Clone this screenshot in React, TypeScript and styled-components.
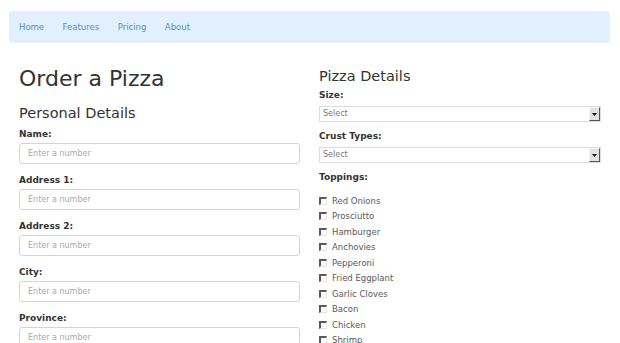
import React from "react";
import styled, { createGlobalStyle } from "styled-components";

const Global = createGlobalStyle`
  html, body { margin: 0; padding: 0; background: #fff; }
  body { font-family: "DejaVu Sans", Verdana, sans-serif; color: #333; }
  * { box-sizing: border-box; }
`;

const Page = styled.div`
  padding: 11px 10px 0 9px;
  width: 620px;
  height: 343px;
  overflow: hidden;
`;

const Nav = styled.nav`
  width: 601px;
  height: 32px;
  background: #e2effc;
  border-radius: 4px;
  display: flex;
  align-items: center;
  gap: 18.5px;
  padding-left: 10px;
`;

const NavLink = styled.a`
  font-size: 8.5px;
  color: #4f8fce;
  text-decoration: none;
`;

const Content = styled.div`
  display: grid;
  grid-template-columns: 281px 282px;
  column-gap: 19px;
  padding: 23px 0 0 10px;
`;

const Column = styled.div<{ $offset?: number }>`
  display: flex;
  flex-direction: column;
  padding-top: ${(p) => p.$offset ?? 0}px;
`;

const Title = styled.h1`
  margin: 0 0 13px;
  font-size: 22px;
  line-height: 26px;
  font-weight: normal;
  color: #333;
`;

const Subtitle = styled.h3<{ $gap: number }>`
  margin: 0 0 ${(p) => p.$gap}px;
  font-size: 14.5px;
  line-height: 17px;
  font-weight: normal;
  color: #333;
`;

const Label = styled.label<{ $gap: number }>`
  display: block;
  font-size: 9px;
  line-height: 13px;
  font-weight: bold;
  color: #333;
  margin-bottom: ${(p) => p.$gap}px;
`;

const Field = styled.div`
  margin-bottom: 10px;
`;

const Input = styled.input`
  display: block;
  width: 100%;
  height: 21px;
  border: 1px solid #d4d4d4;
  border-radius: 3px;
  padding: 0 8px;
  font-family: "DejaVu Sans", Verdana, sans-serif;
  font-size: 8px;
  color: #555;
  &::placeholder { color: #a9a9a9; }
`;

const SelectField = styled.div`
  margin-bottom: 8px;
`;

const SelectBox = styled.div`
  height: 16px;
  border: 1px solid #dcdcdc;
  background: #fff;
  display: flex;
  align-items: stretch;
  justify-content: space-between;
  font-size: 8px;
  color: #777;
`;

const SelectText = styled.span`
  padding-left: 3px;
  line-height: 14px;
`;

const SelectArrow = styled.span`
  width: 11px;
  background: #e2e2e2;
  border-top: 1px solid #f4f4f4;
  border-left: 1px solid #f4f4f4;
  border-right: 1px solid #555;
  border-bottom: 1px solid #555;
  display: flex;
  align-items: center;
  justify-content: center;
`;

const Toppings = styled.div`
  display: flex;
  flex-direction: column;
`;

const Topping = styled.label`
  display: flex;
  align-items: center;
  gap: 5px;
  height: 15.5px;
  font-size: 8.5px;
  color: #5a5a5a;
`;

const Box = styled.span`
  width: 8px;
  height: 8px;
  border-top: 2px solid #5a5a5a;
  border-left: 2px solid #5a5a5a;
  border-right: 1px solid #e6e6e6;
  border-bottom: 1px solid #e6e6e6;
  background: #fff;
  flex: none;
`;

const toppings = [
  "Red Onions",
  "Prosciutto",
  "Hamburger",
  "Anchovies",
  "Pepperoni",
  "Fried Eggplant",
  "Garlic Cloves",
  "Bacon",
  "Chicken",
  "Shrimp",
];

const personal = ["Name:", "Address 1:", "Address 2:", "City:", "Province:"];

function FakeSelect() {
  return (
    <SelectBox>
      <SelectText>Select</SelectText>
      <SelectArrow>
        <svg width="5" height="3" viewBox="0 0 5 3">
          <polygon points="0,0 5,0 2.5,3" fill="#111" />
        </svg>
      </SelectArrow>
    </SelectBox>
  );
}

export default function App() {
  return (
    <Page>
      <Global />
      <Nav>
        <NavLink href="#">Home</NavLink>
        <NavLink href="#">Features</NavLink>
        <NavLink href="#">Pricing</NavLink>
        <NavLink href="#">About</NavLink>
      </Nav>
      <Content>
        <Column>
          <Title>Order a Pizza</Title>
          <Subtitle $gap={5.5}>Personal Details</Subtitle>
          {personal.map((l) => (
            <Field key={l}>
              <Label $gap={2}>{l}</Label>
              <Input placeholder="Enter a number" />
            </Field>
          ))}
        </Column>
        <Column $offset={2}>
          <Subtitle $gap={4}>Pizza Details</Subtitle>
          <SelectField>
            <Label $gap={4}>Size:</Label>
            <FakeSelect />
          </SelectField>
          <SelectField>
            <Label $gap={4}>Crust Types:</Label>
            <FakeSelect />
          </SelectField>
          <Label $gap={9}>Toppings:</Label>
          <Toppings>
            {toppings.map((t) => (
              <Topping key={t}>
                <Box />
                {t}
              </Topping>
            ))}
          </Toppings>
        </Column>
      </Content>
    </Page>
  );
}
